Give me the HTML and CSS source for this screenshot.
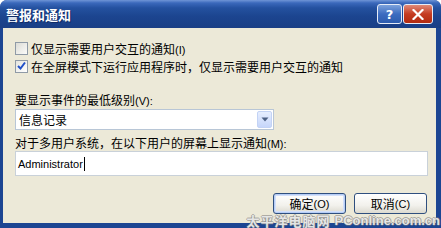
FILE: index.html
```html
<!DOCTYPE html>
<html>
<head>
<meta charset="utf-8">
<link rel="stylesheet" href="styles.css">
</head>
<body>
<div class="window">
  <div class="titlebar">
    <span class="title">警报和通知</span>
    <div class="tbtns">
      <span class="tbtn help">?</span>
      <span class="tbtn close">
        <svg width="12" height="11" viewBox="0 0 12 11"><path d="M1.5 1 L10.5 10 M10.5 1 L1.5 10" stroke="#fff" stroke-width="2.2" stroke-linecap="square"/></svg>
      </span>
    </div>
  </div>
  <div class="client">
    <div class="row">
      <span class="cb"></span>
      <span>仅显示需要用户交互的通知<span class="lat">(I)</span></span>
    </div>
    <div class="row">
      <span class="cb checked">
        <svg width="11" height="11" viewBox="0 0 11 11"><path d="M2 5 L4.5 7.5 L9 1.5" fill="none" stroke="#2150c8" stroke-width="2"/></svg>
      </span>
      <span>在全屏模式下运行应用程序时，仅显示需要用户交互的通知</span>
    </div>
    <div class="label l1">要显示事件的最低级别<span class="lat">(V):</span></div>
    <div class="combo">
      <span class="combo-text">信息记录</span>
      <span class="dd">
        <svg width="8" height="5" viewBox="0 0 8 5"><path d="M0.5 0.5 H7.5 L4 4.5 Z" fill="#4d6185"/></svg>
      </span>
    </div>
    <div class="label l2">对于多用户系统，在以下用户的屏幕上显示通知<span class="lat">(M):</span></div>
    <div class="textbox"><span class="lat">Administrator</span><span class="caret"></span></div>
    <div class="buttons">
      <span class="btn default">确定<span class="lat">(O)</span></span>
      <span class="btn">取消<span class="lat">(C)</span></span>
    </div>
  </div>
  <div class="watermark"><span class="wm-cn">太平洋电脑网</span> PConline.com.cn</div>
</div>
</body>
</html>
```
FILE: styles.css
```css
html, body { margin: 0; padding: 0; }
body {
  width: 441px;
  height: 228px;
  overflow: hidden;
  font-family: "Liberation Sans", "Noto Sans CJK SC", sans-serif;
  font-size: 12px;
  color: #000;
}
.window {
  position: relative;
  width: 441px;
  height: 228px;
  box-sizing: border-box;
  background: #1c4592;
  border-radius: 7px 7px 0 0;
  display: flex;
  flex-direction: column;
  padding: 0 5px 5px 3px;
}
.titlebar {
  height: 28px;
  margin: 0 -5px 0 -3px;
  padding: 0 8px 0 6px;
  display: flex;
  align-items: center;
  justify-content: space-between;
  border-radius: 7px 7px 0 0;
  background: linear-gradient(to bottom, #6f95d6 0px, #3a68bb 3px, #24519f 8px, #1c4590 16px, #1a4189 24px, #1a3f85 28px);
}
.title {
  color: #fff;
  font-weight: bold;
  font-size: 13px;
  font-family: "Noto Sans CJK SC", sans-serif;
  text-shadow: 1px 1px 0 #0f2b66;
}
.tbtns { display: flex; gap: 1px; }
.tbtn {
  height: 20px;
  box-sizing: border-box;
  border: 1px solid #e6ecf7;
  border-radius: 3px;
  display: flex;
  align-items: center;
  justify-content: center;
  color: #fff;
  font-weight: bold;
  font-family: "DejaVu Sans", sans-serif;
  font-size: 13px;
}
.help {
  width: 25px;
  background: linear-gradient(to bottom, #7da2dc, #3c6cc0 50%, #2d5cae);
}
.close {
  width: 30px;
  background: linear-gradient(to bottom, #e08a78, #c53c22 50%, #b22b10);
}
.client {
  flex: 1;
  background: #ece9d8;
  padding: 12px 8px 0 12px;
  display: flex;
  flex-direction: column;
}
.row {
  height: 17px;
  display: flex;
  align-items: center;
  gap: 3px;
  margin-bottom: 1px;
}
.cb {
  width: 13px;
  height: 13px;
  box-sizing: border-box;
  border: 1px solid #8f9aa6;
  background: linear-gradient(135deg, #dcdcd6, #fbfbf9);
  display: flex;
  align-items: center;
  justify-content: center;
  flex: none;
}
.cb.checked { background: linear-gradient(135deg, #e4e4de, #ffffff); }
.lat { font-size: 11px; font-family: "Liberation Sans", sans-serif; }
.label {
  height: 12px;
  line-height: 12px;
  white-space: nowrap;
}
.l1 { margin-top: 19px; }
.l2 { margin-top: 8px; }
.combo {
  margin-top: 2px;
  width: 259px;
  height: 21px;
  box-sizing: border-box;
  border: 1px solid #b8c6d6;
  background: #fff;
  display: flex;
  align-items: center;
  justify-content: space-between;
  padding: 0 1px 0 3px;
}
.dd {
  width: 15px;
  height: 17px;
  box-sizing: border-box;
  border: 1px solid #c3d3f5;
  border-radius: 2px;
  background: linear-gradient(to bottom, #e6eeff, #c6d6fa);
  display: flex;
  align-items: center;
  justify-content: center;
}
.textbox {
  margin-top: 1px;
  width: 413px;
  height: 25px;
  box-sizing: border-box;
  border: 1px solid #c9d1d9;
  background: #fff;
  display: flex;
  align-items: center;
  padding-left: 2px;
}
.caret {
  width: 1px;
  height: 14px;
  background: #000;
  margin-left: 1px;
}
.buttons {
  margin-top: 17px;
  display: flex;
  justify-content: flex-end;
  gap: 8px;
  padding-right: 1px;
}
.btn {
  width: 73px;
  height: 21px;
  box-sizing: border-box;
  border: 1px solid #2f4f7f;
  border-radius: 3px;
  background: linear-gradient(to bottom, #ffffff, #f2f1ec 60%, #dcdad0);
  display: flex;
  align-items: center;
  justify-content: center;
}
.btn.default {
  box-shadow: inset 0 0 0 1px #b6cdf6, inset 0 0 0 2px #d3e0fa;
}
.watermark {
  position: absolute;
  right: 1px;
  bottom: 0;
  height: 15px;
  display: flex;
  align-items: center;
  gap: 4px;
  font-family: "Liberation Sans", sans-serif;
  font-weight: bold;
  font-size: 13px;
  line-height: 15px;
  color: rgba(244, 244, 244, 0.9);
  white-space: nowrap;
  text-shadow: 1px 0 0 rgba(120,120,120,0.55), -1px 0 0 rgba(120,120,120,0.55), 0 1px 0 rgba(120,120,120,0.55), 0 -1px 0 rgba(120,120,120,0.55);
}
.wm-cn {
  font-family: "Noto Sans CJK SC", sans-serif;
  font-size: 13px;
  line-height: 15px;
  letter-spacing: 1px;
}
```
